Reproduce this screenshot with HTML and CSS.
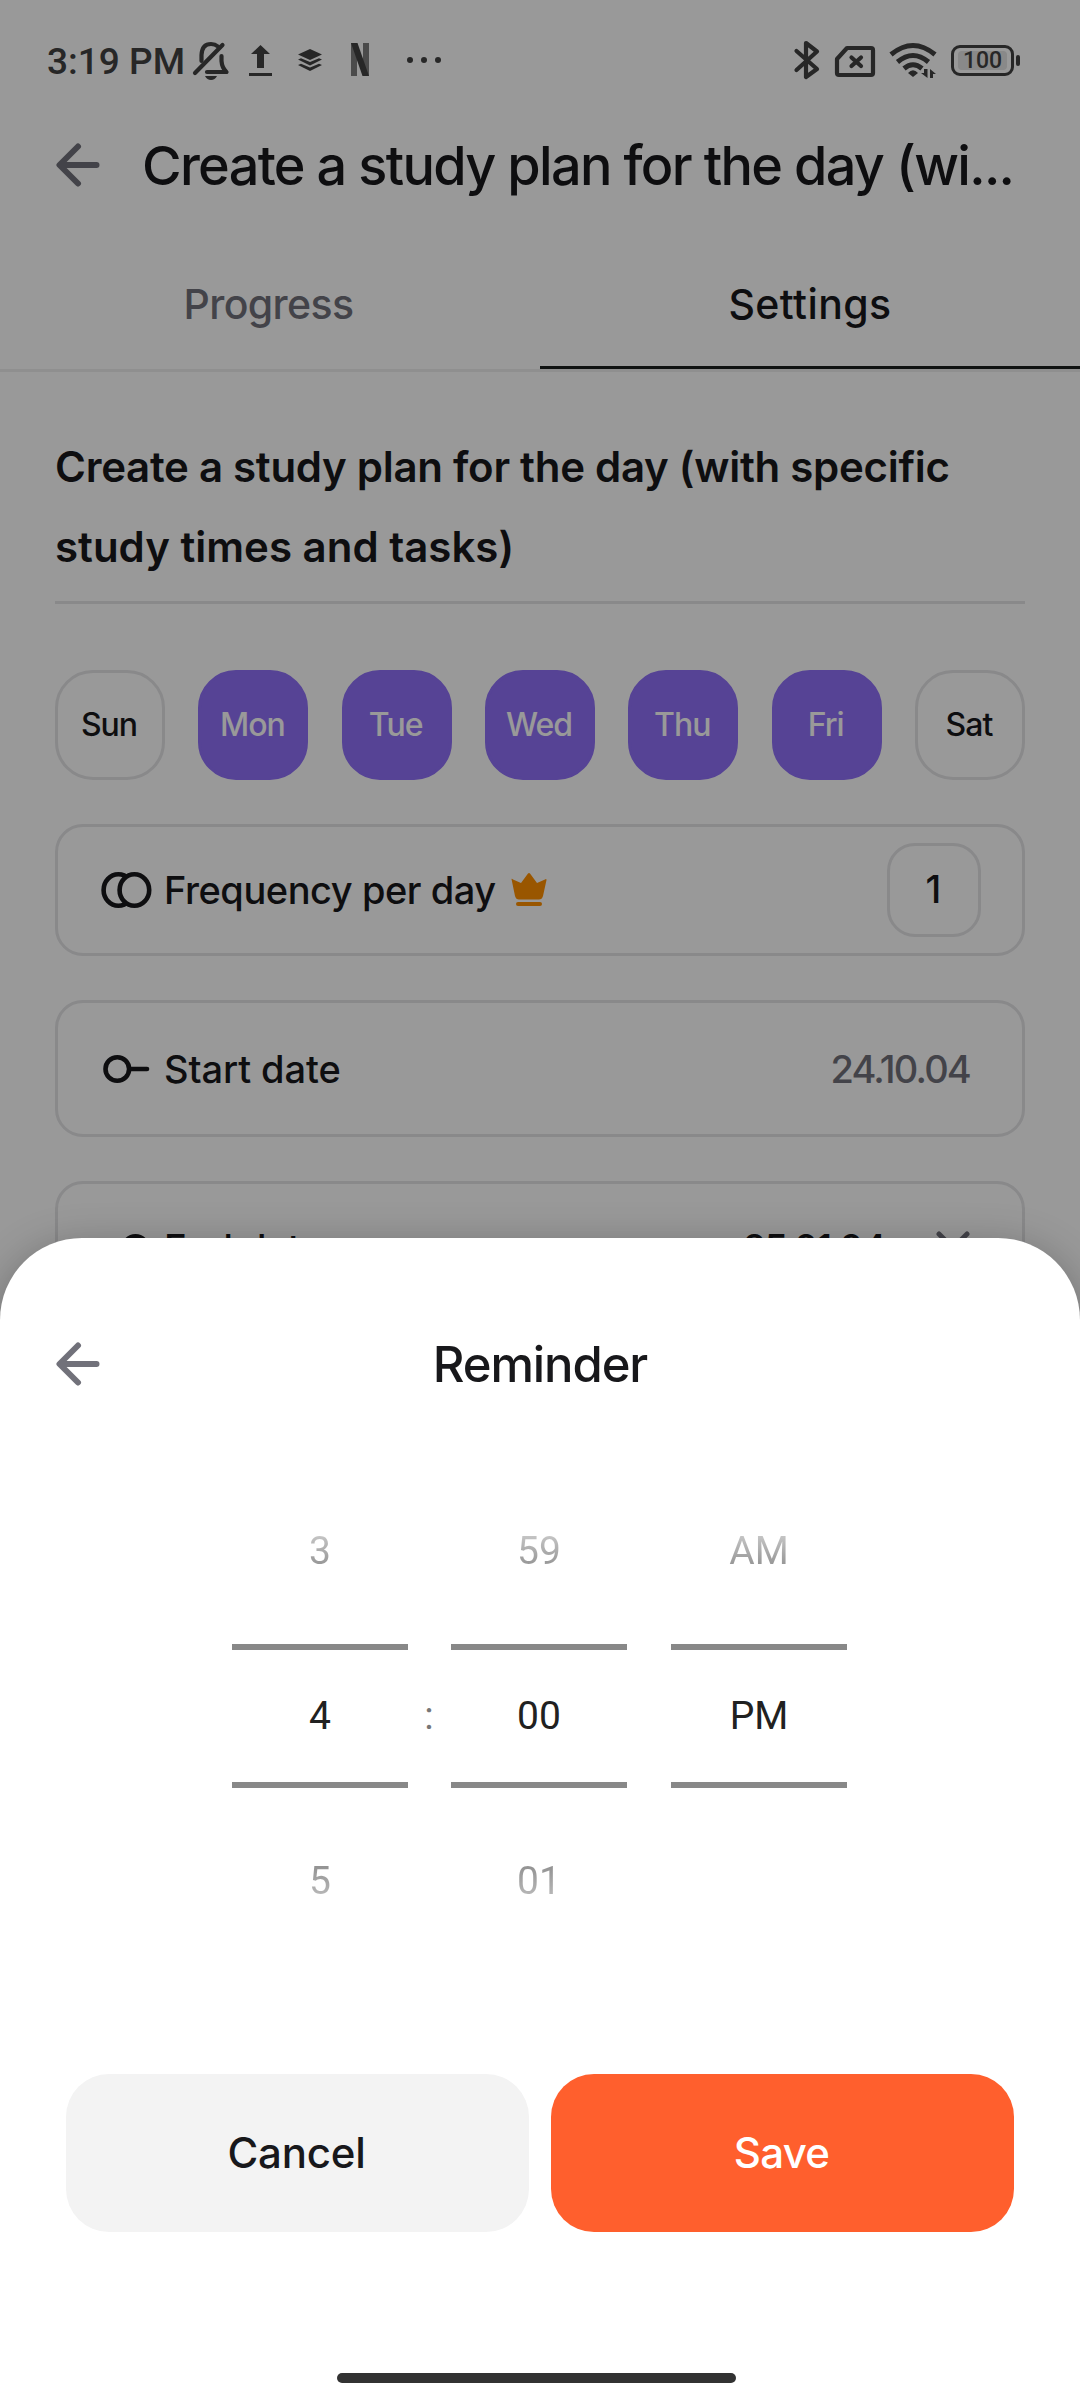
FILE: index.html
```html
<!DOCTYPE html>
<html lang="en">
<head>
<meta charset="utf-8">
<title>Reminder</title>
<link rel="stylesheet" href="styles.css">
</head>
<body>
<div class="phone">
  <main class="page">
    <div class="status">
      <span class="clock">3:19 PM</span>
      <svg class="status-icons-left" width="252" height="44" viewBox="192 38 252 44">
        <path d="M201.500 61V55Q202 44 211 44Q215 44 218 46.500M221.500 56V61Q222 68 226.500 72H207" class="line"/>
        <path d="M195 73L222.500 45" class="line"/>
        <path d="M205 76H217Q215 80 211 80Q207 80 205 76Z"/>
        <path d="M260.500 45L270 54H264V68H257V54H251ZM249 73H272V76H249Z"/>
        <path d="M310 49L322 54.500L310 60L298 54.500Z"/>
        <path d="M298 59.500L301 58.200L310 62L319 58.200L322 59.500L310 65.500ZM298 65L301 63.800L310 67.500L319 63.800L322 65L310 71Z"/>
        <path d="M351 43H357V76H351ZM363 43H369V76H363Z" class="soft"/>
        <path d="M351 43H357.500L369 76H362.500Z"/>
        <circle cx="410" cy="60" r="3"/><circle cx="424" cy="60" r="3"/><circle cx="438" cy="60" r="3"/>
      </svg>
      <div class="status-right">
        <svg width="146" height="44" viewBox="793 38 146 44">
          <path d="M796.500 51L817 69L806 77V43L817 51.500L796.500 70" class="line"/>
          <path d="M847 48H871Q873 48 873 50V73Q873 75 871 75H839Q837 75 837 73V59Z" class="line"/>
          <path d="M851.500 57.500L861 66M861 57.500L851.500 66" class="line"/>
          <path d="M891 54.500Q913 36.500 935 54.500M897.500 62Q913 49 928.500 62M904 68.500Q913 61 922 68.500" class="line wave"/>
          <path d="M908 73Q913 67.500 918 73L913 77Z"/>
          <path d="M927.500 69V78L921 73H924V69ZM930 78V69L936 74H933V78Z"/>
        </svg>
        <div class="battery"><span>100</span></div>
      </div>
    </div>

    <header class="appbar">
      <svg class="back" width="44" height="44" viewBox="0 0 44 44"><path d="M22 3.500L3.500 22L22 40.500M4 22H40.500"/></svg>
      <h1>Create a study plan for the day (wi...</h1>
    </header>

    <nav class="tabs">
      <a class="tab"><span class="t-progress">Progress</span></a>
      <a class="tab active"><span class="t-settings">Settings</span></a>
    </nav>

    <section class="content">
      <h2><span class="h-one">Create a study plan for the day (with specific</span><br><span class="h-two">study times and tasks)</span></h2>
      <div class="days">
        <div class="day">Sun</div>
        <div class="day on">Mon</div>
        <div class="day on">Tue</div>
        <div class="day on">Wed</div>
        <div class="day on">Thu</div>
        <div class="day on">Fri</div>
        <div class="day">Sat</div>
      </div>
      <div class="card freq">
        <svg class="lead" width="56" height="40" viewBox="98 872 56 40"><ellipse cx="118.400" cy="892" rx="14.800" ry="15.800"/><ellipse class="front" cx="134.400" cy="892" rx="14.800" ry="15.800"/></svg>
        <span class="label l-freq">Frequency per day</span>
        <svg class="crown" width="38" height="36" viewBox="510 873 38 36"><path d="M511.500 880Q512 879.500 513 880.500L521 884L528 874.500Q529 873.500 530 874.500L537 884L545 880.500Q546.500 879.500 546.500 881L543 897Q542 900.500 539 900.500H519Q516 900.500 515 897Z"/><rect x="516" y="903" width="26" height="4" rx="2"/></svg>
        <div class="count">1</div>
      </div>
      <div class="card">
        <svg class="lead" width="56" height="40" viewBox="98 1048.500 56 40"><circle cx="117.300" cy="1068.500" r="11.800"/><path d="M131 1068.500H147"/></svg>
        <span class="label">Start date</span>
        <span class="date">24.10.04</span>
      </div>
      <div class="card end">
        <svg class="lead" width="56" height="40" viewBox="98 1228 56 40"><circle cx="135.500" cy="1248" r="11.800"/><path d="M103 1248H121"/></svg>
        <span class="label">End date</span>
        <span class="date dark">25.01.04</span>
        <svg class="close" width="34" height="34" viewBox="0 0 34 34"><path d="M3 3L31 31M31 3L3 31"/></svg>
      </div>
    </section>
  </main>

  <div class="scrim"></div>

  <section class="sheet">
    <header class="sheet-head">
      <svg class="back" width="44" height="44" viewBox="0 0 44 44"><path d="M22 3.500L3.500 22L22 40.500M4 22H40.500"/></svg>
      <h3>Reminder</h3>
    </header>
    <div class="picker">
      <div class="wheel"><span class="prev">3</span><span class="now">4</span><span class="next">5</span></div>
      <span class="colon">:</span>
      <div class="wheel"><span class="prev">59</span><span class="now">00</span><span class="next">01</span></div>
      <span class="gap"></span>
      <div class="wheel"><span class="prev">AM</span><span class="now">PM</span><span class="next"></span></div>
    </div>
    <div class="actions">
      <button class="btn cancel">Cancel</button>
      <button class="btn save">Save</button>
    </div>
    <div class="home"></div>
  </section>
</div>
</body>
</html>
```
FILE: styles.css
```css
* { box-sizing: border-box; margin: 0; padding: 0; }
body { width: 1080px; height: 2400px; overflow: hidden; }
.phone {
  position: relative;
  width: 1080px;
  height: 2400px;
  overflow: hidden;
  background: #fff;
  color: #18181b;
  font-family: "Inter", "Liberation Sans", sans-serif;
  font-weight: 500;
}
.page { height: 100%; overflow: hidden; }

/* status bar */
.status {
  display: flex;
  align-items: center;
  height: 120px;
  padding: 0 60px 0 47px;
  color: #424242;
  font-family: Roboto, sans-serif;
}
.status svg { fill: #424242; }
.status svg .line { fill: none; stroke: #424242; stroke-width: 4.200; stroke-linecap: round; stroke-linejoin: round; }
.status svg .wave { stroke-width: 5; stroke-linecap: butt; }
.status svg .soft { fill: #7d7d7d; }
.clock { width: 145px; padding-top: 3px; font-size: 37px; white-space: nowrap; }
.status-right { display: flex; align-items: center; gap: 12px; margin-left: auto; }
.battery {
  position: relative;
  width: 63px;
  height: 31px;
  margin-right: 6px;
  padding: 3px 4px;
  border: 3px solid #424242;
  border-radius: 9px;
}
.battery span {
  display: block;
  height: 19px;
  border-radius: 4px;
  background: #e4e4e4;
  font-size: 23px;
  line-height: 20px;
  text-align: center;
}
.battery::after {
  content: "";
  position: absolute;
  left: 62px;
  top: 7px;
  width: 4px;
  height: 11px;
  border-radius: 2px;
  background: #424242;
}

/* app bar and tabs */
.appbar { display: flex; align-items: center; height: 90px; padding-left: 56px; gap: 42px; }
.back { flex: none; fill: none; stroke: #71717a; stroke-width: 6; stroke-linecap: round; stroke-linejoin: round; }
h1 { padding-top: 1px; font-size: 54px; font-weight: 500; line-height: 66px; letter-spacing: -1.68px; white-space: nowrap; }
.tabs { display: flex; height: 162px; border-bottom: 3px solid #eee; }
.tab {
  flex: 1;
  display: flex;
  justify-content: center;
  padding-top: 69px;
  color: #71717a;
  font-size: 41px;
  line-height: 50px;
}
.tab.active { color: #18181b; border-bottom: 3px solid #1c211f; }
.t-progress { margin-right: 3px; letter-spacing: -0.6px; }
.t-settings { letter-spacing: 0.4px; }

/* habit settings */
.content { display: flex; flex-direction: column; padding: 55px 55px 0; }
h2 {
  height: 177px;
  border-bottom: 3px solid #e4e4e7;
  font-size: 42px;
  font-weight: 600;
  line-height: 80px;
  white-space: nowrap;
}
.h-one { letter-spacing: -0.28px; }
.days { display: flex; justify-content: space-between; margin-top: 66px; }
.day {
  width: 110px;
  height: 110px;
  border: 3px solid #e4e4e7;
  border-radius: 38px;
  font-size: 32px;
  line-height: 104px;
  letter-spacing: -1px;
  text-indent: -2px;
  text-align: center;
}
.day.on { border-color: #8f70f8; background: #8f70f8; color: #fff; }
.card {
  display: flex;
  align-items: center;
  flex: none;
  height: 137px;
  margin-top: 44px;
  padding: 0 52px 0 40px;
  border: 3px solid #e4e4e7;
  border-radius: 28px;
  font-size: 38px;
  line-height: 46px;
}
.card.freq { height: 132px; padding-right: 41px; }
.card.end { height: 133px; }
.lead { flex: none; fill: none; stroke: #18181b; stroke-width: 4.600; stroke-linecap: round; }
.lead .front { fill: #fff; }
.label { margin-left: 10px; white-space: nowrap; letter-spacing: -0.1px; }
.l-freq { letter-spacing: -0.45px; }
.crown { margin-left: 14px; fill: #ff9000; }
.count {
  width: 94px;
  height: 94px;
  margin-left: auto;
  border: 3px solid #e4e4e7;
  border-radius: 28px;
  line-height: 87px;
  text-align: center;
  text-indent: -1px;
}
.date { margin-left: auto; letter-spacing: -1.8px; color: #71717a; }
.date.dark { color: #18181b; }
.close { margin-left: 51px; fill: none; stroke: #71717a; stroke-width: 5; stroke-linecap: round; }

.scrim { position: absolute; inset: 0; background: rgba(0, 0, 0, .4); }

/* bottom sheet */
.sheet {
  position: absolute;
  left: 0;
  right: 0;
  bottom: 0;
  display: flex;
  flex-direction: column;
  height: 1162px;
  padding-top: 63px;
  border-radius: 82px 82px 0 0;
  background: #fff;
  box-shadow: 0 10px 44px rgba(0, 0, 0, .3);
}
.sheet-head {
  display: grid;
  grid-template-columns: 44px 1fr 44px;
  align-items: center;
  height: 126px;
  padding: 0 56px;
}
h3 { padding-top: 1px; font-size: 49px; font-weight: 500; line-height: 60px; letter-spacing: -1.1px; text-align: center; }
.picker {
  display: flex;
  justify-content: center;
  margin-top: 52px;
  padding-right: 2px;
  font-family: Roboto, sans-serif;
  font-size: 39px;
  font-weight: 400;
  line-height: 46px;
  color: #212121;
}
.wheel { display: flex; flex-direction: column; width: 176px; text-align: center; }
.wheel span { display: block; text-indent: 1px; }
.wheel .prev, .wheel .next { height: 165px; color: transparent; -webkit-background-clip: text; background-clip: text; }
.wheel .prev { padding-top: 49px; background-image: linear-gradient(#ccc 52px, #909090 90px); }
.wheel .now {
  height: 144px;
  padding-top: 43px;
  border-top: 6px solid #888;
  border-bottom: 6px solid #888;
}
.wheel .next { padding-top: 70px; background-image: linear-gradient(#909090 76px, #bbb 110px); }
.colon, .gap { width: 43px; padding-top: 214px; color: #777; text-align: center; }
.gap { width: 44px; }
.actions { display: grid; grid-template-columns: 1fr 1fr; gap: 22px; margin-top: 121px; padding: 0 66px; }
.btn {
  height: 158px;
  padding-right: 2px;
  border: 0;
  border-radius: 43px;
  background: #f3f3f3;
  color: #18181b;
  font: 500 42px/50px "Inter", "Liberation Sans", sans-serif;
}
.btn.cancel { letter-spacing: -0.2px; }
.btn.save { background: #ff5f2d; color: #fff; letter-spacing: -0.7px; }
.home { width: 399px; height: 10px; margin: auto auto 17px 337px; border-radius: 5px; background: #323232; }
```
